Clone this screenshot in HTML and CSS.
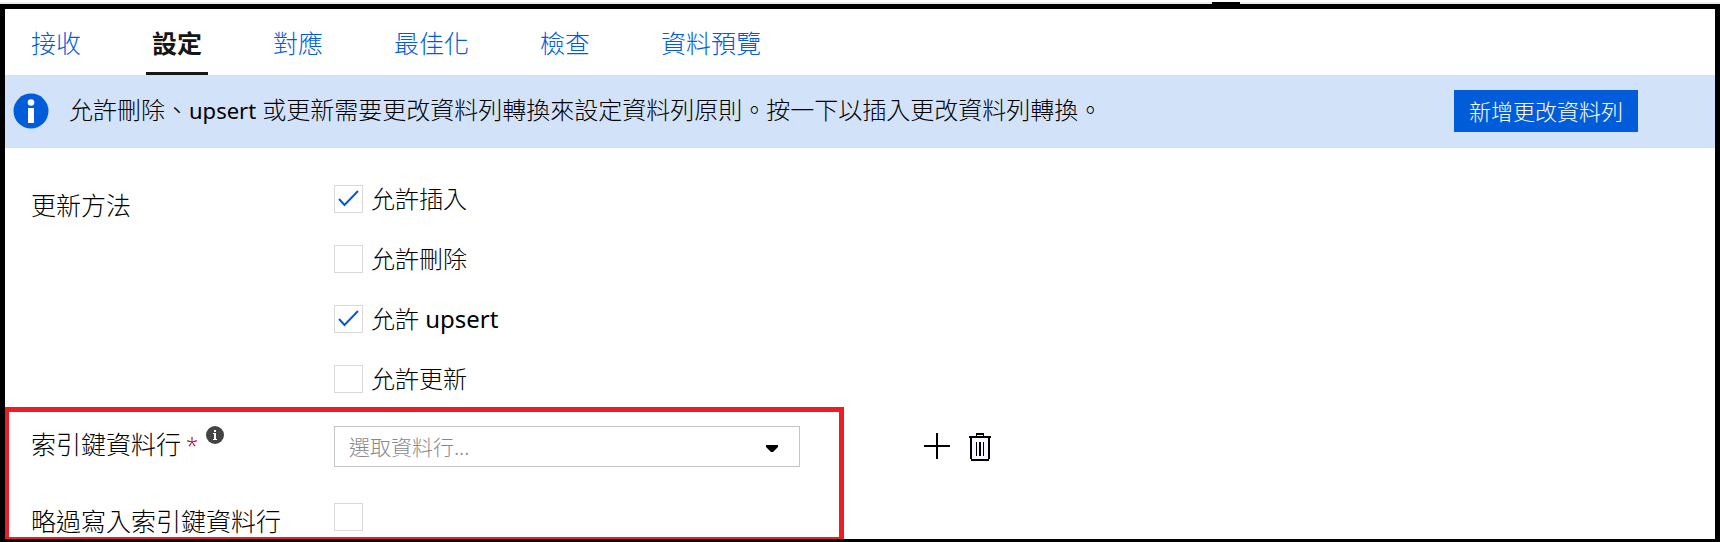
FILE: index.html
```html
<!DOCTYPE html>
<html lang="zh-Hant">
<head>
<meta charset="utf-8">
<meta name="viewport" content="width=device-width, initial-scale=1">
<title>設定</title>
<link rel="stylesheet" href="styles.css">
</head>
<body>
<div class="strip"><div class="strip-handle"></div></div>
<main class="panel">
  <nav class="tabs">
    <a class="tab" href="#sink">接收</a>
    <a class="tab tab-active" href="#settings" aria-current="page">設定</a>
    <a class="tab" href="#mapping">對應</a>
    <a class="tab" href="#optimize">最佳化</a>
    <a class="tab" href="#inspect">檢查</a>
    <a class="tab" href="#preview">資料預覽</a>
  </nav>

  <div class="banner">
    <svg class="banner-icon" viewBox="0 0 36 36" aria-hidden="true">
      <circle cx="18" cy="18" r="17.5" fill="#015cda"/>
      <circle cx="18" cy="9.500" r="3.300" fill="#fff"/>
      <rect x="15" y="15" width="6" height="15" fill="#fff"/>
    </svg>
    <p class="banner-text">允許刪除、<span class="latin">upsert</span> 或更新需要更改資料列轉換來設定資料列原則。按一下以插入更改資料列轉換。</p>
    <button class="banner-button" type="button">新增更改資料列</button>
  </div>

  <form class="settings">
    <div class="row methods" role="group" aria-labelledby="methods-label">
      <div class="row-label" id="methods-label">更新方法</div>
      <div class="options">
        <label class="option">
          <span class="box"><input class="check" type="checkbox" checked><svg class="tick" viewBox="0 0 29 28" aria-hidden="true"><path d="M5 14l5.500 6L24 6"/></svg></span>
          <span>允許插入</span>
        </label>
        <label class="option">
          <span class="box"><input class="check" type="checkbox"><svg class="tick" viewBox="0 0 29 28" aria-hidden="true"><path d="M5 14l5.500 6L24 6"/></svg></span>
          <span>允許刪除</span>
        </label>
        <label class="option">
          <span class="box"><input class="check" type="checkbox" checked><svg class="tick" viewBox="0 0 29 28" aria-hidden="true"><path d="M5 14l5.500 6L24 6"/></svg></span>
          <span>允許 <span class="latin">upsert</span></span>
        </label>
        <label class="option">
          <span class="box"><input class="check" type="checkbox"><svg class="tick" viewBox="0 0 29 28" aria-hidden="true"><path d="M5 14l5.500 6L24 6"/></svg></span>
          <span>允許更新</span>
        </label>
      </div>
    </div>

    <div class="keys">
      <div class="highlight">
        <div class="row key-row">
          <div class="key-label">
            <label for="key-column">索引鍵資料行</label>
            <span class="required">*</span>
            <svg class="hint" viewBox="0 0 18 18" aria-hidden="true">
              <circle cx="9" cy="9" r="9" fill="#444"/>
              <rect x="8" y="4" width="2" height="2" fill="#fff"/>
              <path d="M7 7h3v6h1v1H7v-1h1V8H7z" fill="#fff"/>
            </svg>
          </div>
          <div class="picker">
            <select class="picker-select" id="key-column"><option>選取資料行...</option></select>
            <svg class="picker-arrow" viewBox="0 0 12 7" aria-hidden="true"><path d="M0 0h12v2L7 7H5L0 2z"/></svg>
          </div>
        </div>
        <div class="row skip-row">
          <label class="skip-label" for="skip-keys">略過寫入索引鍵資料行</label>
          <span class="box"><input class="check" id="skip-keys" type="checkbox"><svg class="tick" viewBox="0 0 29 28" aria-hidden="true"><path d="M5 14l5.500 6L24 6"/></svg></span>
        </div>
      </div>
      <div class="actions">
        <button class="icon-button" type="button" aria-label="新增">
          <svg width="26" height="26" viewBox="0 0 26 26" aria-hidden="true"><path d="M12 0h2v12h12v2H14v12h-2V14H0v-2h12z"/></svg>
        </button>
        <button class="icon-button" type="button" aria-label="刪除">
          <svg width="22" height="28" viewBox="0 0 22 28" aria-hidden="true">
            <path d="M2 4h18v23H2z" fill="#f7f7ff"/>
            <path d="M7 0h8v3h7v2h-1v21h-1v2H2v-2H1V5H0V3h7zM8 2v1h6V2zM3 5v21h16V5z" fill-rule="evenodd"/>
            <path d="M7 9h1v14H7zM10 9h2v14h-2zM14 9h1v14h-1z"/>
          </svg>
        </button>
      </div>
    </div>
  </form>
</main>
</body>
</html>
```

FILE: styles.css
```css
* {
  box-sizing: border-box;
}

body {
  margin: 0;
  min-height: 100vh;
  display: flex;
  flex-direction: column;
  background: #fff;
  color: #000;
  font-family: "Noto Sans", "Noto Sans CJK TC", sans-serif;
  font-size: 24px;
  font-weight: 300;
  line-height: 36px;
}

button,
select {
  font: inherit;
}

.latin {
  font-weight: 400;
}

.strip {
  margin-top: 2px;
  padding-left: 1212px;
  background: #eee;
}

.strip-handle {
  width: 28px;
  height: 2px;
  background: #000;
}

.panel {
  flex: 1;
  border: 5px solid #000;
  border-bottom-width: 3px;
}

.tabs {
  display: flex;
  gap: 59px;
  padding: 16px 20px 0;
  font-size: 25px;
}

.tab {
  padding: 0 6px 11px;
  border-bottom: 3px solid transparent;
  color: #015cda;
  text-decoration: none;
  white-space: nowrap;
}

.tab-active {
  border-color: #161616;
  color: #161616;
  font-weight: 700;
}

.banner {
  display: flex;
  align-items: flex-start;
  padding: 14px 77px 15px 8px;
  border: solid #ddd;
  border-width: 1px 0;
  background: #d2e2f9;
}

.banner-icon {
  flex: none;
  width: 36px;
  height: 36px;
  margin: 3px 20px 0 0;
}

.banner-text {
  flex: 1;
  margin: 2px 0 0;
}

.banner-text .latin {
  font-size: 22px;
}

.banner-button {
  height: 42px;
  padding: 0 15px;
  border: 0;
  background: #015cda;
  color: #fff;
  font-size: 22px;
  line-height: 42px;
  white-space: nowrap;
}

.settings {
  padding-top: 33px;
}

.row {
  display: grid;
  grid-template-columns: 303px 1fr;
}

.methods {
  padding-left: 26px;
}

.row-label {
  padding-top: 6px;
  font-size: 25px;
}

.options {
  display: grid;
  gap: 24px;
}

.option {
  display: flex;
  align-items: center;
  gap: 8px;
}

.box {
  display: grid;
  width: 29px;
  height: 28px;
}

.check {
  grid-area: 1 / 1;
  appearance: none;
  width: 29px;
  height: 28px;
  margin: 0;
  border: 1px solid #d9d9d9;
  background: #fff;
}

.tick {
  grid-area: 1 / 1;
  z-index: 1;
  visibility: hidden;
  fill: none;
  stroke: #015cda;
  stroke-width: 2;
  pointer-events: none;
}

.check:checked + .tick {
  visibility: visible;
}

.keys {
  display: flex;
  align-items: flex-start;
  margin-top: 10px;
}

.highlight {
  flex: 0 1 839px;
  padding: 14px 39px 4px 22px;
  border: solid #ee1c25;
  border-width: 5px 5px 2px 4px;
}

.key-label {
  display: flex;
  align-items: flex-start;
  font-size: 25px;
}

.required {
  margin-left: 5px;
  color: #b5121b;
  font-size: 22px;
}

.hint {
  width: 18px;
  height: 18px;
  margin-left: 8px;
}

.picker {
  display: grid;
  align-items: center;
}

.picker-select {
  grid-area: 1 / 1;
  appearance: none;
  width: 100%;
  height: 41px;
  padding: 0 40px 0 14px;
  border: 1px solid #c4c4c4;
  border-radius: 0;
  background: #fff;
  color: #888;
  font-size: 21px;
}

.picker-arrow {
  grid-area: 1 / 1;
  justify-self: end;
  width: 12px;
  height: 7px;
  margin: 3px 22px 0 0;
  pointer-events: none;
}

.skip-row {
  margin-top: 36px;
}

.skip-label {
  height: 30px;
  font-size: 25px;
}

.actions {
  display: flex;
  gap: 19px;
  margin: 26px 0 0 80px;
}

.icon-button {
  display: flex;
  align-items: flex-start;
  padding: 0;
  border: 0;
  background: none;
}
```
